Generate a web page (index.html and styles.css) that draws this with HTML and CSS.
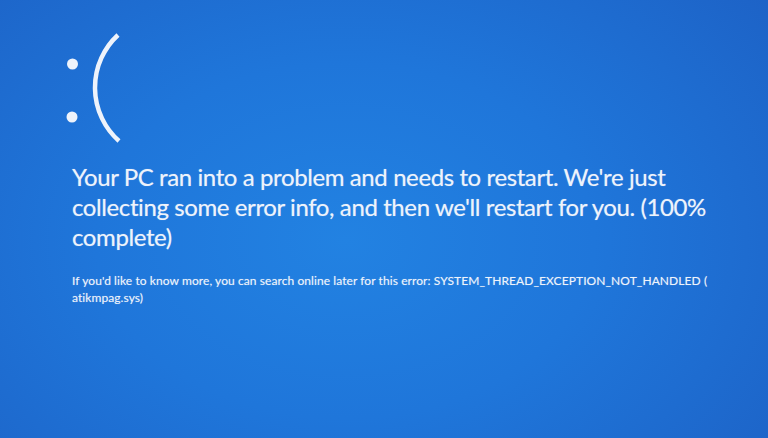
FILE: index.html
```html
<!DOCTYPE html>
<html lang="en">
<head>
<meta charset="utf-8">
<title>Your PC ran into a problem</title>
<link rel="stylesheet" href="styles.css">
</head>
<body>
<main class="screen">
  <svg class="face" width="60" height="112" viewBox="0 0 60 112" aria-label=":(">
    <circle cx="7.5" cy="31" r="5.5" fill="#eef3fb"/>
    <circle cx="7" cy="84" r="5.5" fill="#eef3fb"/>
    <path d="M53 2 A71.5 71.5 0 0 0 54 108" fill="none" stroke="#eef3fb" stroke-width="4.5"/>
  </svg>
  <p class="message">Your PC ran into a problem and needs to restart. We're just<br>collecting some error info, and then we'll restart for you. (100%<br>complete)</p>
  <p class="details">If you'd like to know more, you can search online later for this error: SYSTEM_THREAD_EXCEPTION_NOT_HANDLED (<br>atikmpag.sys)</p>
</main>
</body>
</html>
```
FILE: styles.css
```css
html, body {
  margin: 0;
  padding: 0;
}
body {
  width: 768px;
  height: 438px;
  overflow: hidden;
  background: #1f70d6;
}
.screen {
  box-sizing: border-box;
  width: 768px;
  height: 438px;
  padding: 33px 0 0 65px;
  background: radial-gradient(ellipse 72% 90% at 45% 55%, #2282e2 0%, #1f76da 45%, #1d62c6 100%);
  color: #eef3fb;
  font-family: Lato, "Open Sans", sans-serif;
  display: flex;
  flex-direction: column;
  align-items: flex-start;
}
.face {
  display: block;
}
.message {
  margin: 17px 0 0 7px;
  font-size: 24px;
  line-height: 30px;
  letter-spacing: -0.4px;
  text-shadow: 0 0 1px rgba(255, 255, 255, 0.45);
}
.details {
  margin: 20px 0 0 7px;
  font-size: 12px;
  line-height: 17px;
  letter-spacing: 0.08px;
  text-shadow: 0 0 1px rgba(255, 255, 255, 0.4);
}
```
